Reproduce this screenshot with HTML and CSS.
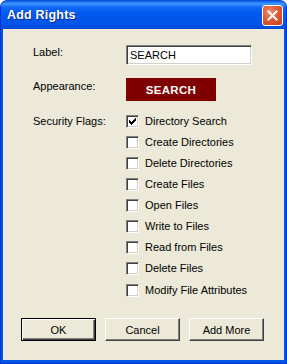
FILE: index.html
```html
<!DOCTYPE html>
<html lang="en">
<head>
    <meta charset="UTF-8">
    <title>Add Rights</title>
    <link rel="stylesheet" href="styles.css">
</head>
<body>
    <div class="window">
        <div class="titlebar">
            <span class="title">Add Rights</span>
            <div class="close-btn">
                <svg width="11" height="11" viewBox="0 0 11 11">
                    <path d="M1.5 1.5 L9.5 9.5 M9.5 1.5 L1.5 9.5" stroke="#fff" stroke-width="2" stroke-linecap="square"/>
                </svg>
            </div>
        </div>
        <div class="dialog">
            <div class="row row-label">
                <label class="field-name">Label:</label>
                <div class="textbox">SEARCH</div>
            </div>
            <div class="row row-appearance">
                <span class="field-name">Appearance:</span>
                <div class="preview">SEARCH</div>
            </div>
            <div class="row row-flags">
                <span class="field-name">Security Flags:</span>
                <div class="flags">
                    <div class="flag"><span class="checkbox checked"><svg width="7" height="7" viewBox="0 0 7 7"><path d="M0 2h1v1h1v1h1v-1h1v-1h1v-1h1v-1h1v3h-1v1h-1v1h-1v1h-1v1h-1v-1h-1v-1h-1z" fill="#000"/></svg></span>Directory Search</div>
                    <div class="flag"><span class="checkbox"></span>Create Directories</div>
                    <div class="flag"><span class="checkbox"></span>Delete Directories</div>
                    <div class="flag"><span class="checkbox"></span>Create Files</div>
                    <div class="flag"><span class="checkbox"></span>Open Files</div>
                    <div class="flag"><span class="checkbox"></span>Write to Files</div>
                    <div class="flag"><span class="checkbox"></span>Read from Files</div>
                    <div class="flag"><span class="checkbox"></span>Delete Files</div>
                    <div class="flag"><span class="checkbox"></span>Modify File Attributes</div>
                </div>
            </div>
            <div class="buttons">
                <button class="btn default">OK</button>
                <button class="btn">Cancel</button>
                <button class="btn">Add More</button>
            </div>
        </div>
    </div>
</body>
</html>
```
FILE: styles.css
```css
body {
    margin: 0;
    padding: 0;
    background: #fff;
    font-family: 'Liberation Sans', Arial, sans-serif;
    font-size: 11px;
    color: #000;
}

.window {
    width: 287px;
    height: 364px;
    box-sizing: border-box;
    background: #0055e5;
    border-radius: 7px 7px 0 0;
    border: 1px solid #0831d9;
    border-top-color: #0a4fd8;
    display: flex;
    flex-direction: column;
    overflow: hidden;
}

.titlebar {
    height: 28px;
    flex-shrink: 0;
    display: flex;
    align-items: center;
    justify-content: space-between;
    padding: 0 3px 0 6px;
    background: linear-gradient(to bottom, #0a5fe8 0%, #3f98ff 10%, #1269f5 22%, #0058ee 45%, #0055e8 80%, #0049d6 100%);
}

.title {
    color: #fff;
    font-weight: bold;
    font-size: 12.5px;
    text-shadow: 1px 1px 0 #0a2a8a;
    letter-spacing: 0.2px;
}

.close-btn {
    width: 19px;
    height: 19px;
    border: 1px solid #fff;
    border-radius: 3px;
    background: radial-gradient(circle at 35% 30%, #f08a6a 0%, #e05b35 45%, #c9401c 100%);
    display: flex;
    align-items: center;
    justify-content: center;
    margin-top: 1px;
}

.dialog {
    flex: 1;
    margin: 0 2px 3px 2px;
    background: #ece9d8;
    padding: 16px 0 0 30px;
    display: flex;
    flex-direction: column;
}

.row {
    display: flex;
}

.field-name {
    width: 93px;
    flex-shrink: 0;
    line-height: 13px;
}

.row-label .field-name {
    padding-top: 1px;
}

.textbox {
    width: 126px;
    height: 20px;
    box-sizing: border-box;
    background: #fff;
    border-top: 1px solid #808080;
    border-left: 1px solid #808080;
    border-right: 1px solid #fff;
    border-bottom: 1px solid #fff;
    box-shadow: inset 1px 1px 0 #404040, inset -1px -1px 0 #d4d0c8;
    padding: 3px 3px 0 3px;
    line-height: 13px;
}

.row-appearance {
    margin-top: 13px;
}

.row-appearance .field-name {
    padding-top: 2px;
}

.preview {
    width: 90px;
    height: 23px;
    background: #800000;
    color: #fff;
    font-weight: bold;
    font-size: 11.5px;
    letter-spacing: 0.3px;
    display: flex;
    align-items: center;
    justify-content: center;
}

.row-flags {
    margin-top: 14px;
}

.flags {
    display: flex;
    flex-direction: column;
    gap: 8px;
}

.flag {
    display: flex;
    align-items: center;
    height: 13px;
    line-height: 13px;
}

.flag:last-child {
    margin-top: 1px;
}

.checkbox {
    width: 13px;
    height: 13px;
    box-sizing: border-box;
    background: #fff;
    border-top: 1px solid #808080;
    border-left: 1px solid #808080;
    border-right: 1px solid #fff;
    border-bottom: 1px solid #fff;
    box-shadow: inset 1px 1px 0 #404040, inset -1px -1px 0 #d4d0c8;
    margin-right: 6px;
    display: flex;
    align-items: center;
    justify-content: center;
}

.buttons {
    display: flex;
    gap: 9px;
    margin-top: 21px;
    margin-left: -12px;
}

.btn {
    width: 75px;
    height: 23px;
    box-sizing: border-box;
    background: #ece9d8;
    font-family: 'Liberation Sans', Arial, sans-serif;
    font-size: 11px;
    color: #000;
    padding: 0;
    border-top: 1px solid #fff;
    border-left: 1px solid #fff;
    border-right: 1px solid #404040;
    border-bottom: 1px solid #404040;
    box-shadow: inset -1px -1px 0 #808080;
}

.btn.default {
    border: 1px solid #000;
    box-shadow: inset 1px 1px 0 #fff, inset -1px -1px 0 #404040, inset -2px -2px 0 #808080;
}
```
